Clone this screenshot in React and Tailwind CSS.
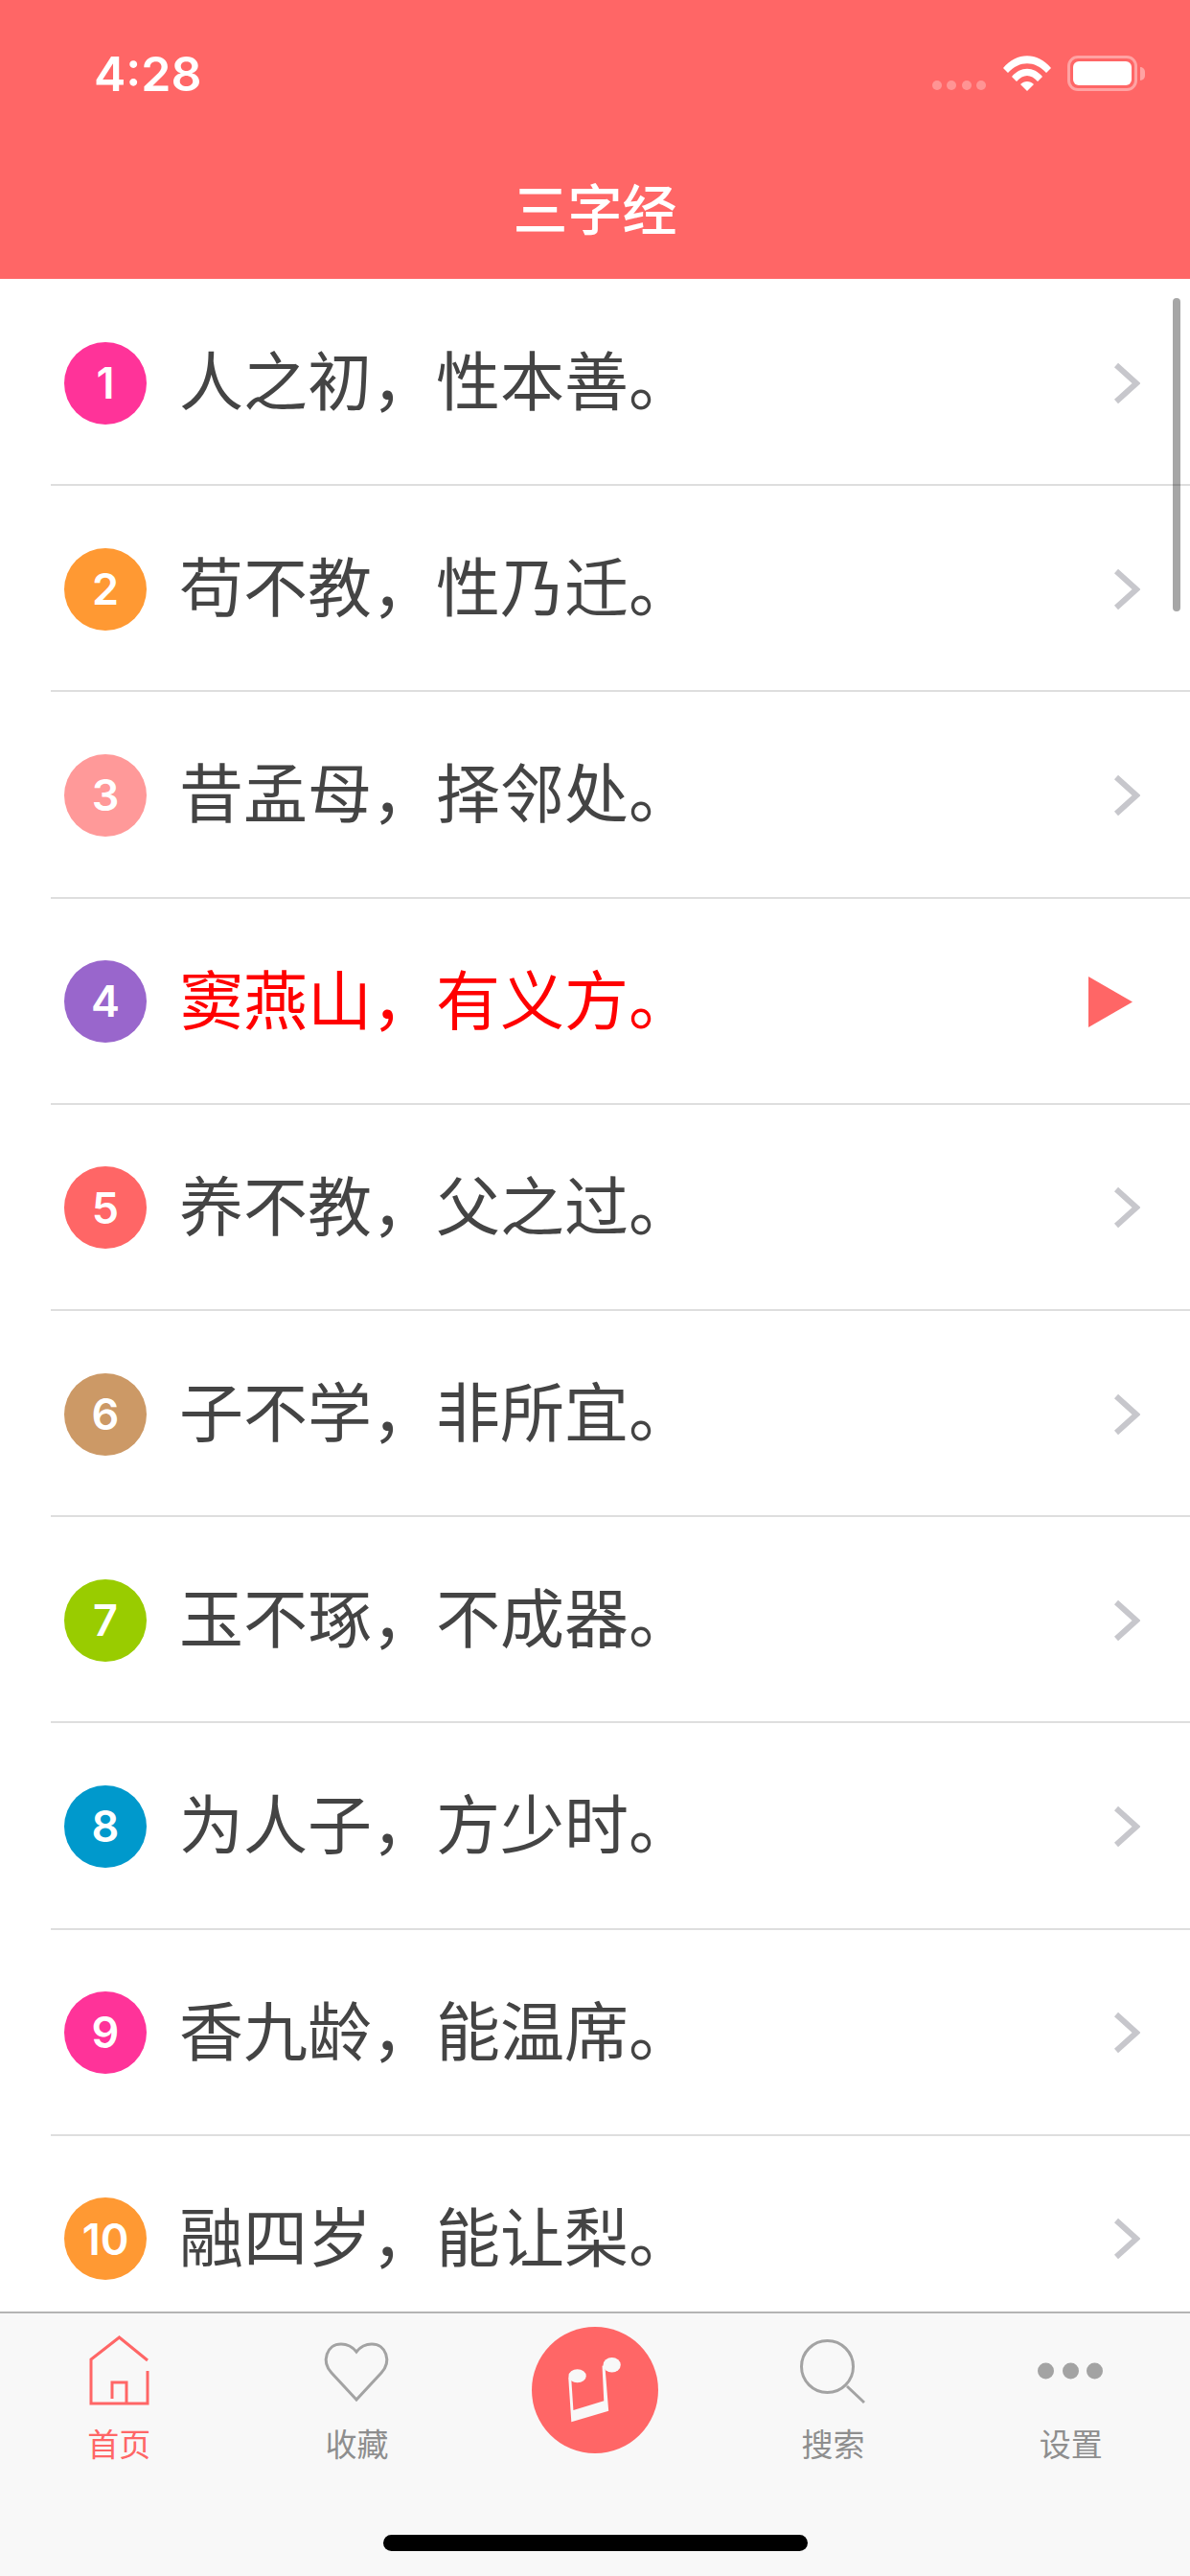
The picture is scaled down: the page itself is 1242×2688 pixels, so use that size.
const ROWS = [
  { n: 1, text: "人之初，性本善。", bg: "bg-[#ff3399]" },
  { n: 2, text: "苟不教，性乃迁。", bg: "bg-[#ff9933]" },
  { n: 3, text: "昔孟母，择邻处。", bg: "bg-[#ff9999]" },
  { n: 4, text: "窦燕山，有义方。", bg: "bg-[#9966cc]", playing: true },
  { n: 5, text: "养不教，父之过。", bg: "bg-[#ff6666]" },
  { n: 6, text: "子不学，非所宜。", bg: "bg-[#cc9966]" },
  { n: 7, text: "玉不琢，不成器。", bg: "bg-[#99cc00]" },
  { n: 8, text: "为人子，方少时。", bg: "bg-[#0099cc]" },
  { n: 9, text: "香九龄，能温席。", bg: "bg-[#ff3399]" },
  { n: 10, text: "融四岁，能让梨。", bg: "bg-[#ff9933]" },
];

const CJK = "font-['Liberation_Sans','Noto_Sans_CJK_SC',sans-serif]";

function Row({ n, text, bg, playing }) {
  return (
    <div className="h-[215.2px] shrink-0 pl-[53px] flex flex-col">
      <div className="flex-1 flex items-center border-b-2 border-[#dedede] pt-[2px]">
        <div
          className={`w-[86px] h-[86px] ml-[14px] rounded-full ${bg} flex items-center justify-center text-white text-[45px] font-semibold font-['Inter',sans-serif]`}
        >
          {n}
        </div>
        <div
          className={`ml-[34px] flex-1 text-[67px] leading-none ${CJK} ${
            playing ? "text-[#ff0000]" : "text-[#444444]"
          }`}
        >
          {text}
        </div>
        {playing ? (
          <svg width="46" height="53" viewBox="0 0 46 53" className="mr-[60px]">
            <polygon points="0,0 46,26.5 0,53" fill="#ff6666" />
          </svg>
        ) : (
          <svg width="28" height="44" viewBox="0 0 28 44" className="mr-[52px]">
            <polyline points="3,3 24,22 3,41" fill="none" stroke="#c7c7cc" strokeWidth="6" />
          </svg>
        )}
      </div>
    </div>
  );
}

function StatusIcons() {
  return (
    <div className="flex items-end">
      <div className="flex gap-[5.5px] mb-[1px]">
        <div className="w-[10px] h-[10px] rounded-full bg-white/30" />
        <div className="w-[10px] h-[10px] rounded-full bg-white/30" />
        <div className="w-[10px] h-[10px] rounded-full bg-white/30" />
        <div className="w-[10px] h-[10px] rounded-full bg-white/30" />
      </div>
      <svg width="50" height="37" viewBox="0 0 50 37" className="ml-[18px]">
        <path d="M0 13 C14 -4 36 -4 50 13 L45 18 C33 5 17 5 5 18 Z" fill="#fff" />
        <path d="M9 22 C18 11 32 11 41 22 L36 27 C29 19 21 19 14 27 Z" fill="#fff" />
        <path d="M18 30 C22 26 28 26 32 30 L25 37 Z" fill="#fff" />
      </svg>
      <div className="ml-[17px] w-[73px] h-[37px] rounded-[11px] border-[3px] border-white/40 p-[3px]">
        <div className="w-full h-full rounded-[6px] bg-white" />
      </div>
      <div className="ml-[3px] mb-[11px] w-[5px] h-[14px] rounded-r-full bg-white/40" />
    </div>
  );
}

function Tab({ label, active, children }) {
  return (
    <div className="flex flex-col items-center pt-[10px]">
      <div className="h-[100px] mb-[10px]">{children}</div>
      <div
        className={`text-[33px] leading-[36px] ${CJK} ${active ? "text-[#ff6666]" : "text-[#8e8e8e]"}`}
      >
        {label}
      </div>
    </div>
  );
}

export default function App() {
  return (
    <div className="relative w-[1242px] h-[2688px] flex flex-col overflow-hidden bg-white">
      {/* HEADER */}
      <div className="h-[291px] shrink-0 bg-[#ff6666] text-white">
        <div className="h-[150px] pl-[98px] pr-[47px] pt-[46px] flex justify-between items-start">
          <div className="text-[50px] leading-[62px] font-semibold font-['Inter',sans-serif]">4:28</div>
          <div className="mt-[12px]">
            <StatusIcons />
          </div>
        </div>
        <div className={`text-center text-[57px] leading-[70px] mt-[35px] font-medium ${CJK}`}>三字经</div>
      </div>

      {/* LIST */}
      <div className="relative flex-1 overflow-hidden pt-[1px]">
        {ROWS.map((r) => (
          <Row key={r.n} {...r} />
        ))}
        <div className="absolute right-[10px] top-[20px] w-[8px] h-[327px] rounded-full bg-black/35" />
      </div>

      {/* TAB BAR */}
      <div className="relative h-[276px] shrink-0 bg-[#f8f8f8] border-t-2 border-[#b4b4b4] grid grid-cols-5">
        <Tab label="首页" active>
          <svg width="80" height="100" viewBox="84 2424 80 100" fill="none" stroke="#ff6666" strokeWidth="3">
            <path d="M154 2463 L124.5 2439 L95 2462 V2508 H154 V2474" />
            <path d="M117 2503 V2486 H132 V2508" />
          </svg>
        </Tab>
        <Tab label="收藏">
          <svg width="80" height="100" viewBox="333 2424 80 100" fill="none" stroke="#a3a3a3" strokeWidth="3">
            <path d="M372 2504 L346 2476 C335 2464 341 2446 356 2446 C363 2446 368 2449 372 2454 C376 2449 381 2446 388 2446 C403 2446 409 2464 398 2476 Z" />
          </svg>
        </Tab>
        <div className="flex justify-center pt-[14px]">
          <div className="w-[132px] h-[132px] rounded-full bg-[#ff6666] flex items-center justify-center">
            <svg width="60" height="70" viewBox="285 180 165 200" fill="#f8f8f8">
              <ellipse cx="315" cy="238" rx="26" ry="20" />
              <ellipse cx="418" cy="205" rx="26" ry="22" />
              <path d="M288 240 L297 375 L408 342 L397 205 L389 208 L394 312 L303 340 L297 250 Z" />
            </svg>
          </div>
        </div>
        <Tab label="搜索">
          <svg width="80" height="100" viewBox="829 2424 80 100" fill="none" stroke="#a3a3a3" strokeWidth="3">
            <circle cx="863.5" cy="2469.5" r="27" />
            <path d="M884 2490 L902 2507" />
          </svg>
        </Tab>
        <Tab label="设置">
          <svg width="80" height="100" viewBox="1078 2424 80 100" fill="#a3a3a3">
            <circle cx="1091.5" cy="2474" r="8.5" />
            <circle cx="1117.5" cy="2474" r="8.5" />
            <circle cx="1142.5" cy="2474" r="8.5" />
          </svg>
        </Tab>
        <div className="absolute left-[400px] bottom-[26px] w-[443px] h-[17px] rounded-full bg-black" />
      </div>
    </div>
  );
}
